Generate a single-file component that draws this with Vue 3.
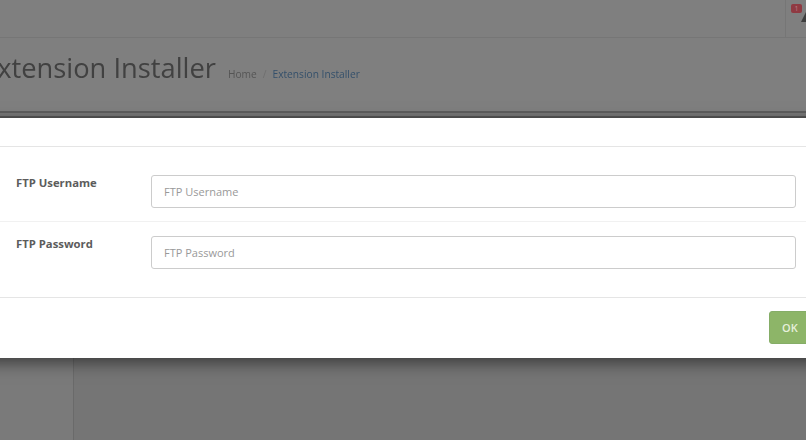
<script setup>
const fields = [
  { label: 'FTP Username', type: 'text' },
  { label: 'FTP Password', type: 'password' },
]
</script>

<template>
  <div class="page">
    <header class="topbar">
      <div class="alert">
        <span class="badge">1</span>
        <svg class="bell" width="6" height="12" viewBox="0 0 6 12"><path d="M6 0 L0 12 H6Z" fill="#3f3f3f" /></svg>
      </div>
    </header>
    <section class="heading">
      <h1 class="title">Extension Installer</h1>
      <nav class="crumbs">
        <span class="home">Home</span>
        <span class="sep">/</span>
        <span class="current">Extension Installer</span>
      </nav>
    </section>
    <div class="rule"></div>
    <div class="below">
      <aside class="side"></aside>
      <main class="content"></main>
    </div>

    <div class="modal">
      <div class="modal-head"></div>
      <form class="modal-body" @submit.prevent>
        <div v-for="f in fields" :key="f.label" class="row">
          <label class="label">{{ f.label }}</label>
          <input class="input" :type="f.type" :placeholder="f.label" />
        </div>
      </form>
      <div class="modal-foot">
        <button class="ok" type="button">OK</button>
      </div>
    </div>
  </div>
</template>

<style scoped>
.page {
  position: relative;
  width: 806px;
  height: 440px;
  overflow: hidden;
  background: #7f7f7f;
  font-family: "Open Sans", sans-serif;
}
.topbar {
  height: 37px;
  border-bottom: 1px solid #767676;
  display: flex;
  justify-content: flex-end;
}
.alert {
  width: 20px;
  border-left: 1px solid #767676;
  position: relative;
}
.badge {
  position: absolute;
  left: 5px;
  top: 4px;
  width: 11px;
  height: 9px;
  border-radius: 2px;
  background: #8f3a42;
  color: #b98084;
  font-size: 7px;
  line-height: 9px;
  text-align: center;
}
.bell {
  position: absolute;
  left: 15px;
  top: 10px;
}
.heading {
  height: 73px;
  display: flex;
  align-items: baseline;
  margin-left: -18px;
}
.title {
  margin: 9px 0 0;
  font-size: 27.3px;
  font-weight: 400;
  line-height: 42px;
  color: #414141;
  filter: blur(0.3px);
}
.crumbs {
  margin-left: 12px;
  font-size: 10.2px;
  display: flex;
  gap: 6px;
  color: #555;
  filter: blur(0.3px);
}
.sep { color: #6f6f6f; }
.current { color: #34506b; }
.rule {
  height: 7px;
  border-top: 2px solid #5e5e5e;
  border-bottom: 2px solid #555;
  background: #777;
  box-sizing: border-box;
}
.below {
  display: flex;
  height: 322px;
  background: #757575;
}
.side {
  width: 73px;
  background: #7a7a7a;
  border-right: 1px solid #6a6a6a;
}
.content { flex: 1; }
.modal {
  position: absolute;
  left: -20px;
  top: 118px;
  width: 846px;
  height: 240px;
  background: #fff;
  box-shadow: 0 5px 15px rgba(0, 0, 0, 0.5);
  display: flex;
  flex-direction: column;
}
.modal-head {
  height: 28px;
  border-bottom: 1px solid #e5e5e5;
}
.modal-body {
  height: 151px;
  padding: 13px 0 0 20px;
  border-bottom: 1px solid #e5e5e5;
  box-sizing: border-box;
}
.row {
  display: flex;
  padding: 15px 0 13px 16px;
  margin-right: 10px;
}
.row + .row {
  padding-top: 14px;
}
.row:first-child {
  border-bottom: 1px solid #f1f1f1;
}
.label {
  width: 135px;
  font-size: 11.3px;
  font-weight: 700;
  color: #5c5c5c;
  line-height: 16px;
}
.input {
  width: 645px;
  height: 33px;
  box-sizing: border-box;
  border: 1px solid #ccc;
  border-radius: 3px;
  padding: 0 12px;
  font-family: inherit;
  font-size: 11px;
  color: #555;
  outline: none;
}
.input::placeholder { color: #999; opacity: 1; }
.modal-foot {
  flex: 1;
  padding-left: 789px;
  padding-top: 13px;
}
.ok {
  width: 60px;
  height: 33px;
  border: 1px solid #85ad67;
  border-radius: 3px;
  background: #8db568;
  color: #e6f0dc;
  font-family: inherit;
  font-size: 11px;
  font-weight: 600;
  text-align: left;
  padding: 0 12px;
}
</style>
